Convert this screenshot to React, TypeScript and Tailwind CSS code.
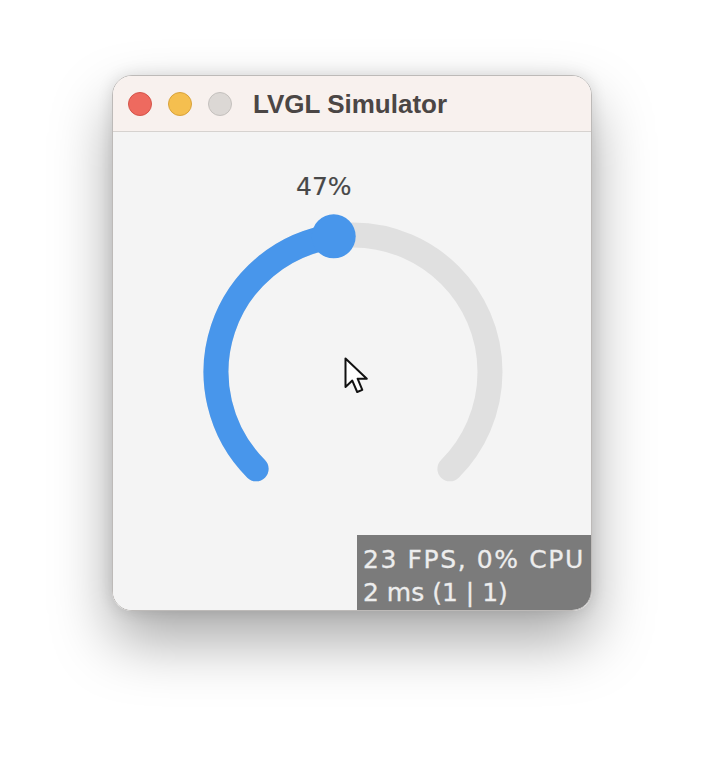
const cx = 240;
const cy = 240;
const r = 137;

const point = (deg: number) => {
  const a = (deg * Math.PI) / 180;
  return [cx + r * Math.cos(a), cy + r * Math.sin(a)];
};

const GaugeArc = ({ value }: { value: number }) => {
  const start = 135;
  const end = start + (value / 100) * 270;
  const [sx, sy] = point(start);
  const [bx, by] = point(405);
  const [ex, ey] = point(end);
  const large = end - start > 180 ? 1 : 0;
  return (
    <svg width="480" height="480" viewBox="0 0 480 480" className="absolute inset-0">
      <path
        d={`M${sx} ${sy} A${r} ${r} 0 1 1 ${bx} ${by}`}
        fill="none"
        stroke="#e0e0e0"
        strokeWidth="25"
        strokeLinecap="round"
      />
      <path
        d={`M${sx} ${sy} A${r} ${r} 0 ${large} 1 ${ex} ${ey}`}
        fill="none"
        stroke="#4896eb"
        strokeWidth="25"
        strokeLinecap="round"
      />
      <circle cx={ex} cy={ey} r="22" fill="#4896eb" />
    </svg>
  );
};

// macOS style pointer
const Cursor = () => (
  <svg width="30" height="40" viewBox="0 0 30 40" className="absolute left-[230px] top-[224px]">
    <path
      d="M2.5 2.5 L2.5 31 L9.3 24.6 L14.2 36 L19.3 33.8 L14.6 22.7 L23.8 22.7 Z"
      fill="#fff"
      stroke="#111"
      strokeWidth="2"
      strokeLinejoin="round"
    />
  </svg>
);

export default function App() {
  const lights = [
    "bg-[#ee6a5f] border-[#d4544a]",
    "bg-[#f5bf4f] border-[#d8a23b]",
    "bg-[#dcd8d5] border-[#c4c0bd]",
  ];

  return (
    <div className="w-[704px] h-[760px] bg-white pl-[112px] pt-[75px]">
      <div className="w-[480px] h-[536px] rounded-[20px] overflow-hidden border border-[#bdbab8] shadow-[0_30px_60px_rgba(0,0,0,0.34),0_0_16px_rgba(0,0,0,0.12)] flex flex-col">
        {/* title bar */}
        <div className="h-[56px] shrink-0 bg-[#f8f1ee] border-b border-[#d6d2cf] flex items-center pl-[15px]">
          <div className="flex gap-[16px]">
            {lights.map((c, i) => (
              <div key={i} className={`w-[24px] h-[24px] rounded-full border ${c}`} />
            ))}
          </div>
          <div
            className="ml-[21px] text-[26px] font-bold text-[#4b4645] leading-none"
            style={{ fontFamily: '"Liberation Sans", Arial, sans-serif' }}
          >
            LVGL Simulator
          </div>
        </div>

        {/* display */}
        <div
          className="relative flex-1 bg-[#f4f4f4]"
          style={{ fontFamily: '"DejaVu Sans", sans-serif' }}
        >
          <GaugeArc value={47} />
          <div className="absolute left-[183px] top-[42px] text-[25px] leading-none text-[#484848] [-webkit-text-stroke:0.15px_#484848]">
            47%
          </div>
          <Cursor />
          <div className="absolute right-0 bottom-0 w-[234px] h-[75px] bg-[#7b7b7b] pl-[6px] pt-[8px] text-[25px] leading-[33px] text-[#ededed] [-webkit-text-stroke:0.3px_#ededed]">
            <div className="tracking-[1.6px]">23 FPS, 0% CPU</div>
            <div>2 ms (1 | 1)</div>
          </div>
        </div>
      </div>
    </div>
  );
}
